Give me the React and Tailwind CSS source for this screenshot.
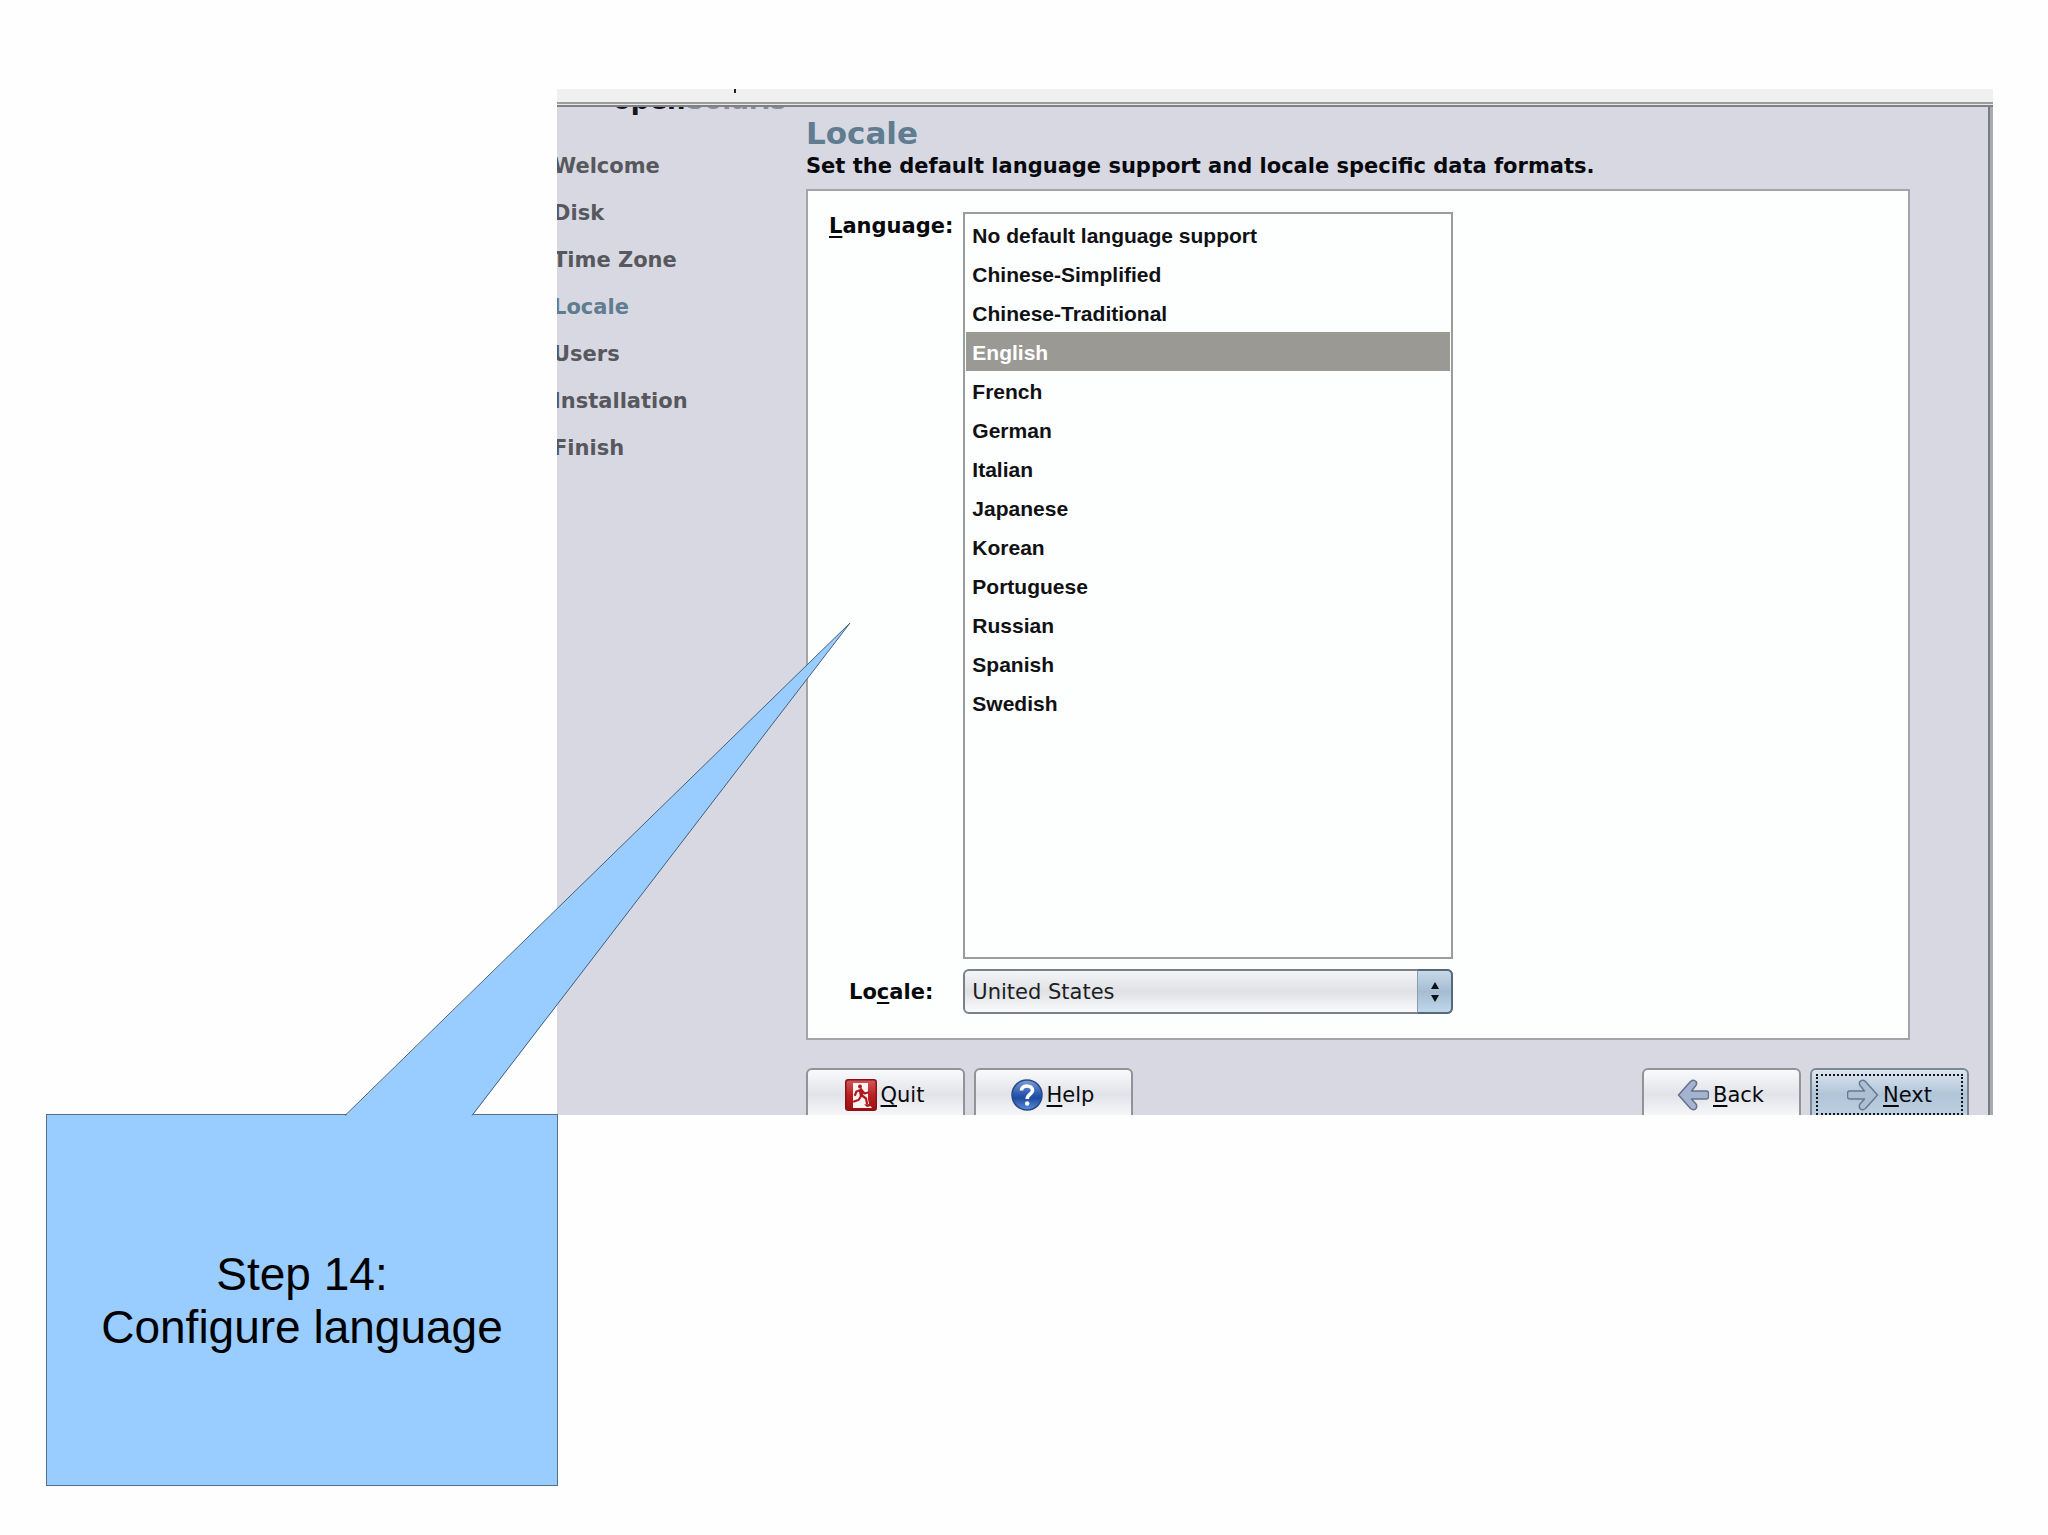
import { useState } from "react";

const STEPS = [
  "Welcome",
  "Disk",
  "Time Zone",
  "Locale",
  "Users",
  "Installation",
  "Finish",
];

const LANGUAGES = [
  "No default language support",
  "Chinese-Simplified",
  "Chinese-Traditional",
  "English",
  "French",
  "German",
  "Italian",
  "Japanese",
  "Korean",
  "Portuguese",
  "Russian",
  "Spanish",
  "Swedish",
];

// underlined mnemonic letter
const Key = ({ children }) => (
  <span className="underline decoration-2 underline-offset-3 [text-decoration-skip-ink:none]">
    {children}
  </span>
);

const QuitIcon = () => (
  <svg viewBox="0 0 32 32" className="size-8">
    <defs>
      <linearGradient id="quit" x1="0" y1="0" x2="0" y2="1">
        <stop offset="0" stopColor="#d0595c" />
        <stop offset="0.5" stopColor="#bb1f22" />
        <stop offset="1" stopColor="#9c1013" />
      </linearGradient>
    </defs>
    <rect x="0.75" y="0.75" width="30.5" height="30.5" rx="2.5" fill="url(#quit)" stroke="#8a1215" strokeWidth="1.5" />
    <path d="M8 4h15v16l1 5 3 4H8z" fill="#fdf3f2" />
    <circle cx="15" cy="7.500" r="2" fill="#b2191c" />
    <path
      d="M16 10l1 7M16.500 16.500l-3 4.500-4.500 1.500M17 16.500l4 3 1 5M15.500 11l-4 1.500-1.500 3.500M16.500 11l3 3.500 3.500-1"
      fill="none"
      stroke="#b2191c"
      strokeWidth="2.200"
      strokeLinecap="round"
      strokeLinejoin="round"
    />
    <path d="M15.500 10.500l1 6.500" stroke="#b2191c" strokeWidth="3.500" />
    <path d="M19 25.500l6-0.500 1 2-4 1z" fill="#b2191c" />
  </svg>
);

const HelpIcon = () => (
  <svg viewBox="0 0 32 32" className="size-8">
    <defs>
      <linearGradient id="help" x1="0" y1="0" x2="0" y2="1">
        <stop offset="0" stopColor="#7f9fd2" />
        <stop offset="0.45" stopColor="#2f5cb0" />
        <stop offset="0.6" stopColor="#1f4a9f" />
        <stop offset="1" stopColor="#5b8ed8" />
      </linearGradient>
    </defs>
    <circle cx="16" cy="16" r="15" fill="url(#help)" stroke="#27488c" strokeWidth="1.5" />
    <path
      d="M10.500 11.500c0-3 2.500-4.500 5.500-4.500s5.500 1.700 5.500 4.500c0 3.800-5.300 3.700-5.300 8.500"
      fill="none"
      stroke="#fff"
      strokeWidth="3.600"
    />
    <circle cx="16.200" cy="24.500" r="2.200" fill="#fff" />
  </svg>
);

const ARROW =
  "M1.500 16L13.500 2.500q3-2.500 5.500 0 1.500 2.500-0.500 4.500L14.500 12H29q2.500 0 2.500 2v4q0 2-2.500 2H14.500l4.500 5q1.500 2 0 4.500-2.500 2.500-5.500 0z";

const ArrowIcon = ({ flip }) => (
  <svg viewBox="0 0 32 32" className="size-8">
    <g transform={flip ? "translate(32 0) scale(-1 1)" : undefined}>
      <path
        d={ARROW}
        fill={flip ? "#adbfd3" : "#a3b3d0"}
        stroke={flip ? "#667a94" : "#66718c"}
        strokeWidth="1.500"
        strokeLinejoin="round"
      />
    </g>
  </svg>
);

const WizardButton = ({ icon, focused, children }) => (
  <button
    className={
      focused
        ? "w-[159px] h-[53px] p-1 rounded-md border-2 border-[#7d8896] bg-linear-to-b from-[#dde6f0] via-[#b0c5d8] to-[#bfd2e4]"
        : "w-[159px] h-[53px] p-1 rounded-md border-2 border-[#919399] bg-linear-to-b from-[#fafafc] via-[#e1e3e8] to-[#fafafc]"
    }
  >
    <span
      className={
        focused
          ? "flex h-[41px] items-center justify-center gap-1 border-2 border-dotted border-[#10151c]"
          : "flex h-[41px] items-center justify-center gap-1 pr-[2px]"
      }
    >
      {icon}
      <span className="pt-[2px]">{children}</span>
    </span>
  </button>
);

const Sidebar = () => (
  <nav className="w-[249px] shrink-0 overflow-hidden font-bold text-[#57585e]">
    <div className="h-9 overflow-hidden pl-[56px]">
      <div className="-mt-[22px] text-[26px] leading-[30px] text-[#8b8c92]">
        <span className="text-[#15161a]">open</span>Solaris
      </div>
    </div>
    <ol className="-ml-1">
      {STEPS.map((step) => (
        <li
          key={step}
          className={
            step === "Locale"
              ? "leading-[47px] text-[#5f7c90]"
              : "leading-[47px]"
          }
        >
          {step}
        </li>
      ))}
    </ol>
  </nav>
);

const LocaleForm = () => {
  const [language, setLanguage] = useState("English");

  return (
    <form className="mr-[59px] mt-[9px] grid grid-cols-[auto_490px] justify-start gap-[10px] border-2 border-[#a2a4a9] bg-[#fdfefe] pt-[21px] pb-[23px] pl-[21px]">
      <label htmlFor="language" className="text-center font-bold leading-7">
        <Key>L</Key>anguage:
      </label>
      <select
        id="language"
        size={13}
        value={language}
        onChange={(e) => setLanguage(e.target.value)}
        className="h-[747px] overflow-hidden border-2 border-[#9b9c9e] bg-[#fdfefe] p-px font-['Liberation_Sans',sans-serif] text-[21px] text-[#101114] outline-none"
      >
        {LANGUAGES.map((name) => (
          <option
            key={name}
            value={name}
            className="h-[39px] p-0 pt-[9px] pl-[6px] font-bold checked:bg-[linear-gradient(#9a9994,#9a9994)] checked:text-white"
          >
            {name}
          </option>
        ))}
      </select>

      <label htmlFor="locale" className="text-center font-bold leading-[46px]">
        Lo<Key>c</Key>ale:
      </label>
      <div className="relative h-[45px]">
        <select
          id="locale"
          className="h-[45px] w-full appearance-none rounded-md border-2 border-[#7b8189] bg-linear-to-b from-[#f4f5f7] via-[#dfe1e5] to-[#fafafb] pt-[2px] pl-[7px] text-[#1c1e22] outline-none"
        >
          <option>United States</option>
        </select>
        <div className="pointer-events-none absolute inset-y-0 right-0 flex w-9 items-center justify-center rounded-r-md border-2 border-l-1 border-[#56687a] border-l-[#8b9dae] bg-linear-to-b from-[#c8d9e8] via-[#a4bdd2] to-[#c0d7ea]">
          <svg viewBox="0 0 10 22" className="h-[22px] w-[10px]">
            <path d="M5 1l4 7H1zM5 21l4-7H1z" fill="#0c1116" />
          </svg>
        </div>
      </div>
    </form>
  );
};

const Installer = () => (
  <div className="ml-[557px] mr-[55px] overflow-hidden font-['DejaVu_Sans',sans-serif] text-[21px] text-[#08090c]">
    {/* bottom edge of the title bar */}
    <div className="h-[13px] bg-[#f0f0f0] pl-[177px]">
      <div className="h-1 w-[2px] bg-[#222]" />
    </div>
    <div className="h-[5px] border-t-2 border-b-2 border-t-[#9b9c9e] border-b-[#7f8185] bg-[#e9e9ec]" />
    <div className="border-r-3 border-[#a7aab0]">
      <div className="flex border-r-2 border-[#757d87] bg-[#d7d8e2]">
        <Sidebar />
        <main className="min-w-0 flex-1 pr-[19px] pt-[9px]">
          <h1 className="pb-[2px] text-[31px] font-bold leading-[34px] text-[#5f7c90]">
            Locale
          </h1>
          <p className="font-bold leading-7">
            Set the default language support and locale specific data formats.
          </p>
          <LocaleForm />
          <div className="mt-7 flex h-[47px] gap-[9px] overflow-hidden">
            <WizardButton icon={<QuitIcon />}>
              <Key>Q</Key>uit
            </WizardButton>
            <WizardButton icon={<HelpIcon />}>
              <Key>H</Key>elp
            </WizardButton>
            <div className="flex-1" />
            <WizardButton icon={<ArrowIcon />}>
              <Key>B</Key>ack
            </WizardButton>
            <WizardButton icon={<ArrowIcon flip />} focused>
              <Key>N</Key>ext
            </WizardButton>
          </div>
        </main>
      </div>
    </div>
  </div>
);

const Callout = () => (
  <div className="relative -mt-px ml-[46px] flex h-[372px] w-[512px] items-center justify-center border border-[#55708c] bg-[#99ccff] pt-[2px] text-center font-['Liberation_Sans',sans-serif] text-[46px] leading-[53px] text-black">
    <p>
      Step 14:
      <br />
      Configure language
    </p>
    {/* pointer, drawn over the installer window */}
    <svg
      viewBox="0 0 506 494"
      className="pointer-events-none absolute bottom-full left-[298px] -mb-px h-[494px] w-[506px]"
    >
      <path d="M0 494L505 1 127 494z" fill="#99ccff" />
      <path d="M0 493.500L505 1 127 493.500" fill="none" stroke="#45607c" />
    </svg>
  </div>
);

function App() {
  return (
    <div className="min-h-screen bg-[#fefefe] pt-[89px] pb-[50px]">
      <Installer />
      <Callout />
    </div>
  );
}

export default App;
